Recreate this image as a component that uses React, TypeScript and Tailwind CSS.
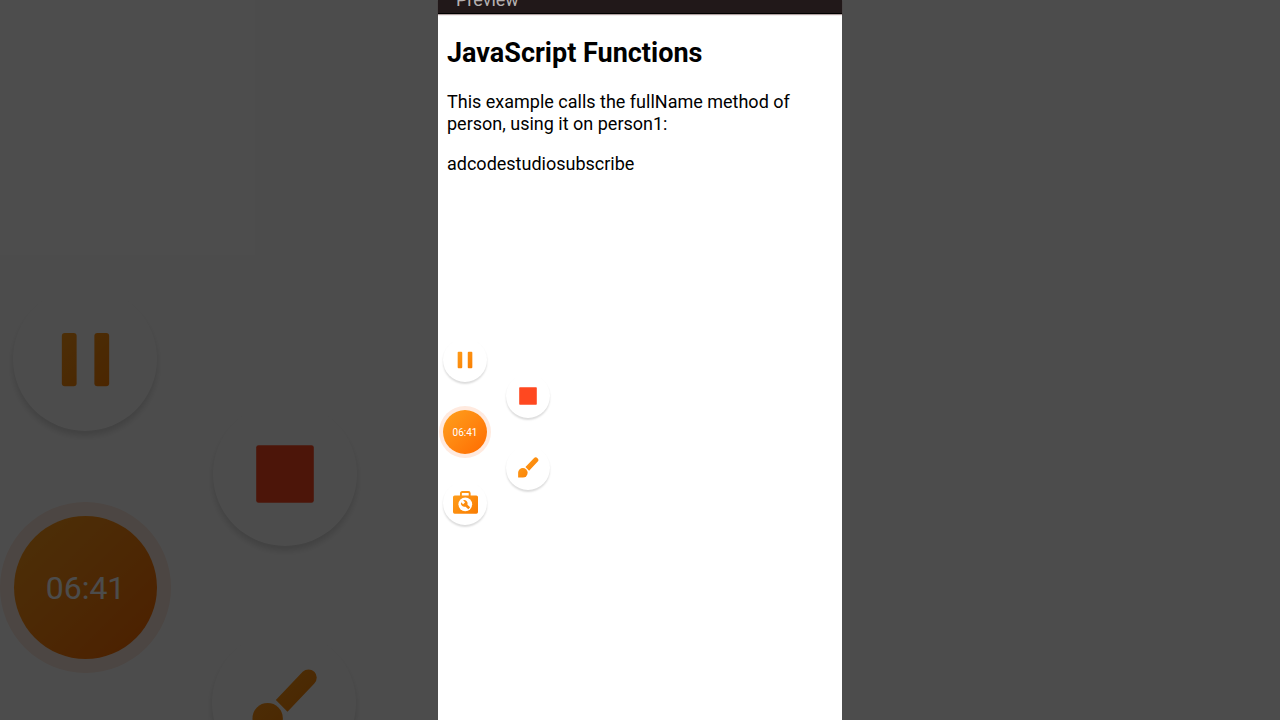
import { useId } from "react";
import clsx from "clsx";

type BubbleSize = "sm" | "lg";

function OrangeGradient({ id }: { id: string }) {
  return (
    <linearGradient id={id} x1="0" y1="0" x2="24" y2="24" gradientUnits="userSpaceOnUse">
      <stop offset="0" stopColor="#ffa01c" />
      <stop offset="1" stopColor="#f97a00" />
    </linearGradient>
  );
}

function PauseIcon({ className }: { className: string }) {
  const id = useId();
  return (
    <svg viewBox="0 0 24 24" className={className} aria-hidden="true">
      <defs>
        <OrangeGradient id={id} />
      </defs>
      <g fill={`url(#${id})`}>
        <rect x="4" y="3" width="5" height="18" rx="1" />
        <rect x="15" y="3" width="5" height="18" rx="1" />
      </g>
    </svg>
  );
}

function StopIcon({ className }: { className: string }) {
  return (
    <svg viewBox="0 0 24 24" className={className} aria-hidden="true">
      <rect x="2.4" y="2.4" width="19.2" height="19.2" rx="0.8" fill="#ff4820" />
    </svg>
  );
}

function BrushIcon({ className }: { className: string }) {
  const id = useId();
  return (
    <svg viewBox="0 0 24 24" className={className} aria-hidden="true">
      <defs>
        <OrangeGradient id={id} />
      </defs>
      <g fill={`url(#${id})`}>
        <path d="M9.2 11 18.4 1.3a2.8 2.8 0 0 1 4 4L13.2 15z" />
        <path d="M1.2 22.4V17.2a5.2 5.2 0 1 1 5.2 5.2z" />
      </g>
    </svg>
  );
}

function ToolboxIcon({ className }: { className: string }) {
  const id = useId();
  return (
    <svg viewBox="0 0 24 24" className={className} aria-hidden="true">
      <defs>
        <OrangeGradient id={id} />
      </defs>
      <path
        d="M7.6 5V2.2a1.2 1.2 0 0 1 1.2-1.2h6a1.2 1.2 0 0 1 1.2 1.2V5"
        fill="none"
        stroke={`url(#${id})`}
        strokeWidth="1.8"
      />
      <rect y="4.2" width="24" height="17.6" rx="1.6" fill={`url(#${id})`} />
      <circle cx="11.8" cy="12.8" r="6.6" fill="#fff" />
      <path
        d="M7.7 10.8a3.4 3.4 0 0 0 4.4 4.2l2.6 2.5 1.8-1.8-2.6-2.6a3.4 3.4 0 0 0-4.2-4.3l1.9 2-1.8 1.9z"
        fill={`url(#${id})`}
      />
    </svg>
  );
}

function Bubble({
  label,
  size,
  className,
  children,
}: {
  label: string;
  size: BubbleSize;
  className: string;
  children: React.ReactNode;
}) {
  return (
    <button
      aria-label={label}
      className={clsx(
        "absolute flex items-center justify-center rounded-full bg-white",
        size === "lg"
          ? "size-[144px] shadow-[0_5px_6px_rgba(0,0,0,0.14)]"
          : "size-[44px] shadow-[0_2px_2px_rgba(0,0,0,0.14)]",
        className,
      )}
    >
      {children}
    </button>
  );
}

// Enlarged, dimmed part of the screen that shows beside the phone.
function Backdrop() {
  return (
    <div className="relative min-w-0 flex-1 overflow-hidden bg-white" aria-hidden="true">
      <Bubble label="Pause" size="lg" className="left-[13px] top-[calc(50%-73px)]">
        <PauseIcon className="size-[71px]" />
      </Bubble>
      <Bubble label="Stop" size="lg" className="left-[213px] top-[calc(50%+42px)]">
        <StopIcon className="size-[72px]" />
      </Bubble>
      <button className="absolute left-[14px] top-[calc(50%+156px)] size-[143px] rounded-full bg-linear-to-br from-[#ffa01c] to-[#ff6a00] text-[32px] text-white ring-[14px] ring-[#ffeadf]">
        06:41
      </button>
      <Bubble label="Draw" size="lg" className="left-[212px] top-[calc(50%+271px)]">
        <BrushIcon className="size-[70px]" />
      </Bubble>
      <div className="absolute inset-0 bg-black/70" />
    </div>
  );
}

function RecorderControls() {
  return (
    <div>
      <Bubble label="Pause" size="sm" className="left-[5px] top-[calc(50%-22px)]">
        <PauseIcon className="size-[22px]" />
      </Bubble>
      <Bubble label="Stop" size="sm" className="left-[68px] top-[calc(50%+14px)]">
        <StopIcon className="size-[22px]" />
      </Bubble>
      <button className="absolute left-[5px] top-[calc(50%+50px)] size-[44px] rounded-full bg-linear-to-br from-[#ffa01c] to-[#ff6a00] text-[10px] text-white ring-4 ring-[#ffeadf]">
        06:41
      </button>
      <Bubble label="Draw" size="sm" className="left-[68px] top-[calc(50%+86px)]">
        <BrushIcon className="size-[22px]" />
      </Bubble>
      <Bubble label="Toolbox" size="sm" className="left-[5px] top-[calc(50%+121px)]">
        <ToolboxIcon className="size-[25px]" />
      </Bubble>
    </div>
  );
}

export default function App() {
  return (
    <div className="flex min-h-screen bg-[#4c4c4c] font-[Roboto,sans-serif]">
      <Backdrop />
      <main className="relative w-[404px] shrink-0 bg-white text-black">
        <header className="flex h-[14px] items-end overflow-hidden border-b border-black bg-[#211819] px-[18px] pb-[2px] shadow-[0_1px_1px_rgba(60,20,20,0.4)]">
          <span className="text-[18px] leading-[22px] text-[#b5b0b0]">Preview</span>
        </header>
        <article className="px-[9px] pt-[22px] text-[18px] leading-[22px]">
          <h1 className="text-[27px] font-bold leading-[34px]">JavaScript Functions</h1>
          <p className="mt-[21px]">
            This example calls the fullName method of person, using it on person1:
          </p>
          <p className="mt-[18px]">adcodestudiosubscribe</p>
        </article>
        <RecorderControls />
      </main>
      <div className="min-w-0 flex-1" />
    </div>
  );
}
